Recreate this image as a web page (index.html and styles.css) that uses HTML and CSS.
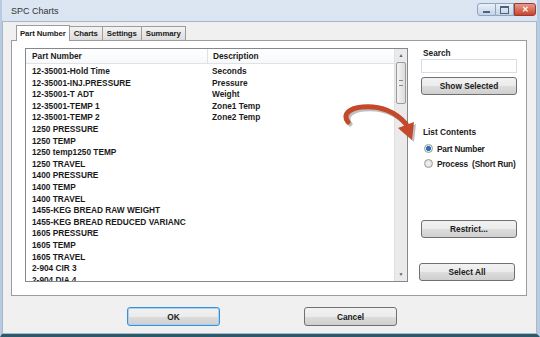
FILE: index.html
```html
<!DOCTYPE html>
<html lang="en">
<head>
<meta charset="UTF-8">
<title>SPC Charts</title>
<link rel="stylesheet" href="styles.css">
</head>
<body>

<div class="window">
  <div class="titlebar">
    <span class="title">SPC Charts</span>
    <div class="winbtns">
      <span class="wb min"><i></i></span>
      <span class="wb max"><i></i></span>
      <span class="wb close">&#x2715;</span>
    </div>
  </div>

  <div class="body">
    <div class="tabs">
      <span class="tab active">Part Number</span>
      <span class="tab">Charts</span>
      <span class="tab">Settings</span>
      <span class="tab">Summary</span>
    </div>

    <div class="panel">
      <div class="list">
        <div class="list-head">
          <span class="col1">Part Number</span>
          <span class="col2">Description</span>
        </div>
        <div class="rows" id="rows"></div>
        <div class="scroll">
          <span class="arr">&#9650;</span>
          <span class="thumb"><i></i></span>
          <span class="arr down">&#9660;</span>
        </div>
      </div>

      <div class="side">
        <label class="lbl">Search</label>
        <input class="search" type="text">
        <button class="btn">Show Selected</button>

        <div class="lbl contents">List Contents</div>
        <label class="radio first"><span class="dot on"></span>Part Number</label>
        <label class="radio"><span class="dot"></span>Process&nbsp; (Short Run)</label>

        <button class="btn restrict">Restrict...</button>
        <button class="btn selectall">Select All</button>
      </div>
    </div>

    <div class="footer">
      <button class="btn big ok">OK</button>
      <button class="btn big">Cancel</button>
    </div>
  </div>

  <!-- callout arrow drawn over the dialog -->
  <svg class="callout" width="90" height="50" viewBox="0 0 90 50">
    <path d="M8 22 C2 14 10 8 22 7 C40 5 56 12 66 24" fill="none" stroke="rgba(0,0,0,0.25)" stroke-width="5" stroke-linecap="round" transform="translate(2,2)"/>
    <polygon points="58,28 74,22 72,40" fill="rgba(0,0,0,0.25)" transform="translate(2,2)"/>
    <path d="M8 22 C2 14 10 8 22 7 C40 5 56 12 66 24" fill="none" stroke="#c4492b" stroke-width="5" stroke-linecap="round"/>
    <polygon points="58,28 74,22 72,40" fill="#c4492b"/>
  </svg>
</div>

<script>
  var parts = [
    ['12-35001-Hold Time', 'Seconds'],
    ['12-35001-INJ.PRESSURE', 'Pressure'],
    ['12-35001-T ADT', 'Weight'],
    ['12-35001-TEMP 1', 'Zone1 Temp'],
    ['12-35001-TEMP 2', 'Zone2 Temp'],
    ['1250 PRESSURE', ''],
    ['1250 TEMP', ''],
    ['1250 temp1250 TEMP', ''],
    ['1250 TRAVEL', ''],
    ['1400 PRESSURE', ''],
    ['1400 TEMP', ''],
    ['1400 TRAVEL', ''],
    ['1455-KEG BREAD RAW WEIGHT', ''],
    ['1455-KEG BREAD REDUCED VARIANC', ''],
    ['1605 PRESSURE', ''],
    ['1605 TEMP', ''],
    ['1605 TRAVEL', ''],
    ['2-904 CIR 3', ''],
    ['2-904 DIA 4', '']
  ];

  var rows = document.getElementById('rows');
  parts.forEach(function(p) {
    var row = document.createElement('div');
    row.className = 'row';
    row.innerHTML = '<span class="col1">' + p[0] + '</span><span class="col2">' + p[1] + '</span>';
    rows.appendChild(row);
  });
</script>

</body>
</html>
```

FILE: styles.css
```css
html, body {
  margin: 0;
  padding: 0;
  width: 540px;
  height: 337px;
  overflow: hidden;
  font-family: "Liberation Sans", Arial, sans-serif;
  font-size: 8.3px;
  font-weight: bold;
  color: #1a1a1a;
  background: #ffffff;
}
.window {
  position: relative;
  width: 540px;
  height: 337px;
  box-sizing: border-box;
  display: flex;
  flex-direction: column;
  background: linear-gradient(#dbe6f2, #c9d8e8);
  border-left: 2px solid #b9cbe0;
  border-right: 3px solid #b9cbe0;
  border-bottom: 3px solid #2c5a6a;
}
.titlebar {
  height: 21px;
  display: flex;
  align-items: center;
  justify-content: space-between;
  padding-left: 9px;
}
.title {
  font-weight: normal;
  font-size: 9px;
  color: #333;
}
.winbtns {
  display: flex;
  align-self: flex-start;
  margin-top: 3px;
  margin-right: 1px;
}
.wb {
  height: 13px;
  border: 1px solid #8fa3bd;
  background: linear-gradient(#e9f0f8, #c4d3e5);
  display: flex;
  align-items: center;
  justify-content: center;
  box-sizing: border-box;
}
.wb.min { width: 19px; border-radius: 3px 0 0 3px; }
.wb.min i { width: 7px; height: 2px; background: #4c6280; margin-top: 4px; }
.wb.max { width: 18px; border-left: none; }
.wb.max i { width: 7px; height: 5px; border: 1px solid #4c6280; border-top-width: 2px; }
.wb.close {
  width: 22px;
  border-radius: 0 3px 3px 0;
  border-color: #9b3a2c;
  background: linear-gradient(#e89a88, #c8452d);
  color: #fff;
  font-size: 8px;
}
.body {
  flex: 1;
  background: #f0f0f0;
  border: 1px solid #a9b8c8;
  display: flex;
  flex-direction: column;
  padding: 2px 9px 0 8px;
}
.tabs {
  display: flex;
  align-items: flex-end;
  height: 16px;
  padding-left: 5px;
  font-size: 7.8px;
  letter-spacing: -0.1px;
}
.tab {
  height: 13px;
  line-height: 13px;
  padding: 0 4px;
  border: 1px solid #9c9c9c;
  border-bottom: none;
  border-left: none;
  background: linear-gradient(#f3f3f3, #dcdcdc);
}
.tab.active {
  height: 15px;
  line-height: 15px;
  background: #ffffff;
  border-left: 1px solid #9c9c9c;
  padding: 0 3px;
  margin-bottom: -1px;
  position: relative;
}
.panel {
  height: 256px;
  box-sizing: border-box;
  background: #ffffff;
  border: 1px solid #9c9c9c;
  display: flex;
  padding: 7px 0 0 13px;
}
.list {
  position: relative;
  width: 383px;
  height: 234px;
  box-sizing: border-box;
  border: 1px solid #828790;
  overflow: hidden;
}
.list-head {
  display: flex;
  height: 14px;
  line-height: 14px;
  border-bottom: 1px solid #e2e2e2;
  background: linear-gradient(#ffffff, #f7f8fa);
}
.list-head .col1 {
  border-right: 1px solid #e2e2e2;
}
.col1 {
  width: 175px;
  padding-left: 6px;
  flex: none;
}
.col2 {
  padding-left: 5px;
}
.rows {
  padding-top: 2px;
}
.row {
  display: flex;
  height: 11.6px;
  line-height: 11.6px;
  white-space: nowrap;
}
.scroll {
  position: absolute;
  top: 0;
  right: 0;
  width: 12px;
  height: 100%;
  background: #eaeaea;
  border-left: 1px solid #e0e0e0;
  display: flex;
  flex-direction: column;
  align-items: center;
}
.scroll .arr {
  height: 13px;
  line-height: 13px;
  font-size: 5px;
  color: #606060;
}
.scroll .thumb {
  width: 10px;
  height: 42px;
  border: 1px solid #9a9a9a;
  border-radius: 2px;
  background: linear-gradient(90deg, #f4f4f4, #dcdcdc);
  box-sizing: border-box;
  display: flex;
  align-items: center;
  justify-content: center;
}
.scroll .thumb i {
  width: 4px;
  height: 4px;
  border-top: 1px solid #888;
  border-bottom: 1px solid #888;
}
.scroll .down {
  margin-top: auto;
}
.side {
  width: 98px;
  margin-left: 13px;
  display: flex;
  flex-direction: column;
}
.lbl {
  height: 10px;
  line-height: 10px;
  padding-left: 2px;
}
.search {
  height: 14px;
  margin: 1px 0 4px 0;
  width: 96px;
  box-sizing: border-box;
  border: 1px solid #d6dde6;
  padding: 0;
}
.btn {
  font-family: "Liberation Sans", Arial, sans-serif;
  font-size: 8.3px;
  font-weight: bold;
  color: #1a1a1a;
  height: 18px;
  width: 96px;
  border: 1px solid #707070;
  border-radius: 3px;
  background: linear-gradient(#f2f2f2 0%, #ebebeb 50%, #dddddd 51%, #cfcfcf 100%);
  padding: 0;
}
.contents {
  margin-top: 32px;
}
.radio {
  display: flex;
  align-items: center;
  height: 15px;
  padding-left: 3px;
  white-space: nowrap;
  letter-spacing: -0.2px;
}
.radio.first {
  margin-top: 4px;
}
.dot {
  width: 7px;
  height: 7px;
  flex: none;
  border-radius: 50%;
  border: 1px solid #9a9a9a;
  background: radial-gradient(#f4f4f4, #d8d8d8);
  margin-right: 4px;
}
.dot.on {
  background: radial-gradient(#2f6fb8 0, #2f6fb8 45%, #e6eef8 55%);
}
.restrict {
  margin-top: 49px;
}
.selectall {
  margin-top: 25px;
  margin-left: -2px;
}
.footer {
  flex: 1;
  display: flex;
  justify-content: center;
  align-items: center;
  gap: 84px;
  padding-right: 14px;
}
.btn.big {
  width: 93px;
  height: 19px;
  margin-top: 4px;
}
.btn.ok {
  border-color: #3c8fd6;
  box-shadow: inset 0 0 0 1px #a6d3f5;
}
.callout {
  position: absolute;
  left: 338px;
  top: 100px;
}
```
